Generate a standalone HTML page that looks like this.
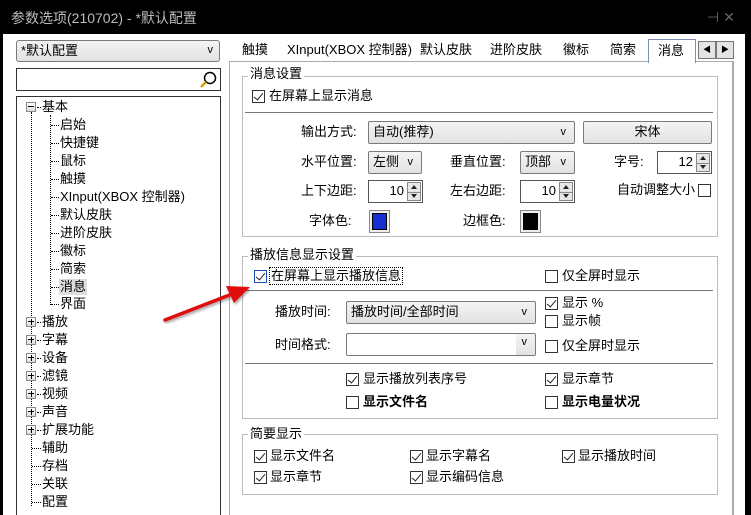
<!DOCTYPE html><html><head><meta charset="utf-8"><style>
*{margin:0;padding:0;box-sizing:border-box}
html{width:751px;height:515px;overflow:hidden;background:#000}
body{width:751px;height:515px;background:#000;position:relative;overflow:hidden;font-family:"Liberation Sans","Noto Sans CJK SC",sans-serif;font-size:13px;color:#000}
.a{position:absolute;white-space:nowrap}
.t{line-height:16px}
.cb{position:absolute;width:13px;height:13px;border:1px solid #333;background:#fff}
.cb.c::after{content:"";position:absolute;left:3px;top:0px;width:4px;height:8px;border:solid #222;border-width:0 1.5px 1.5px 0;transform:rotate(40deg)}
.combo{position:absolute;border:1px solid #7a7a7a;border-radius:2px;background:linear-gradient(#f4f4f4,#e2e2e2);line-height:18px}
.combo .v{position:absolute;right:8px;top:50%;transform:translateY(-55%);font-size:11px}
.grp{position:absolute;border:1px solid #bbb}
.leg{position:absolute;background:#fff;padding:0 2px;line-height:14px}
.sep{position:absolute;height:1px;background:#777}
.spin{position:absolute;border:1px solid #555;background:#fff;text-align:right;padding-right:18px;line-height:20px}
.spin .ar{position:absolute;right:1px;top:1px;width:14px;bottom:1px;border:1px solid #888;background:#e6e6e6}
.spin .ar::before{content:"";position:absolute;left:3px;top:2px;border:3px solid transparent;border-bottom:4px solid #222;border-top:0}
.spin .ar::after{content:"";position:absolute;left:3px;bottom:2px;border:3px solid transparent;border-top:4px solid #222;border-bottom:0}
.spin .ar i{position:absolute;left:0;right:0;top:50%;height:1px;background:#888}
.tr{position:absolute;line-height:16px}
.pb{position:absolute;width:10px;height:10px;border:1px solid #888;background:linear-gradient(#fff,#ddd)}
.pb::before{content:"";position:absolute;left:1px;top:3px;width:6px;height:1px;background:#000}
.pb.p::after{content:"";position:absolute;left:3.5px;top:1px;width:1px;height:6px;background:#000}
.dv{position:absolute;border-left:1px dotted #000;width:0}
.dh{position:absolute;border-top:1px dotted #000;height:0}
</style></head><body>
<div class="a" style="left:11px;top:8px;color:#bbb;font-size:14px">参数选项(210702) - *默认配置</div>
<div class="a" style="left:707px;top:9px;color:#666;font-size:14px">⊣ ✕</div>
<div class="a" style="left:3px;top:34px;width:742px;height:481px;background:#fff"></div>
<div class="combo" style="left:16px;top:40px;width:204px;height:22px;border-radius:3px"><span class="a" style="left:4px;top:1px">*默认配置</span><span class="v" style="right:6px">v</span></div>
<div class="a" style="left:16px;top:68px;width:205px;height:23px;border:1px solid #333;background:#fff"></div>
<svg class="a" style="left:199px;top:70px" width="20" height="20"><circle cx="11" cy="8" r="5.5" fill="none" stroke="#000" stroke-width="1.5"/><line x1="7" y1="12" x2="2" y2="17" stroke="#d8a000" stroke-width="2.5"/></svg>
<div class="a" style="left:16px;top:96px;width:205px;height:419px;border:1px solid #333;border-bottom:none;background:#fff"></div>
<div class="dv" style="left:31px;top:112px;height:394px"></div>
<div class="dv" style="left:50px;top:115px;height:190px"></div>
<div id="tree"></div>
<div class="a t" style="left:242px;top:42px">触摸</div>
<div class="a t" style="left:287px;top:42px">XInput(XBOX 控制器)</div>
<div class="a t" style="left:420px;top:42px">默认皮肤</div>
<div class="a t" style="left:490px;top:42px">进阶皮肤</div>
<div class="a t" style="left:563px;top:42px">徽标</div>
<div class="a t" style="left:610px;top:42px">简索</div>
<div class="a" style="left:229px;top:61px;width:505px;height:454px;border:1px solid #aaa;border-right:2px solid #aaa;border-bottom:none"></div>
<div class="a" style="left:648px;top:39px;width:48px;height:24px;border:1px solid #7f8fb0;border-bottom:none;background:#fff"></div>
<div class="a t" style="left:658px;top:43px">消息</div>
<div class="a" style="left:698px;top:41px;width:18px;height:18px;border:1px solid #777;background:#e4e4e4;font-size:8px;text-align:center;line-height:16px">◀</div>
<div class="a" style="left:716px;top:41px;width:18px;height:18px;border:1px solid #777;background:#e4e4e4;font-size:8px;text-align:center;line-height:16px">▶</div>
<div class="grp" style="left:242px;top:76px;width:476px;height:161px"></div>
<div class="leg" style="left:248px;top:67px">消息设置</div>
<div class="cb c" style="left:252px;top:90px"></div><div class="a t" style="left:269px;top:88px">在屏幕上显示消息</div>
<div class="sep" style="left:245px;top:112px;width:468px"></div>
<div class="a t" style="left:301px;top:124px">输出方式:</div>
<div class="combo" style="left:368px;top:121px;width:207px;height:23px"><span class="a" style="left:4px;top:1px">自动(推荐)</span><span class="v">v</span></div>
<div class="combo" style="left:583px;top:121px;width:129px;height:23px;text-align:center;line-height:20px">宋体</div>
<div class="a t" style="left:301px;top:154px">水平位置:</div>
<div class="combo" style="left:368px;top:151px;width:54px;height:23px"><span class="a" style="left:4px;top:1px">左侧</span><span class="v">v</span></div>
<div class="a t" style="left:450px;top:154px">垂直位置:</div>
<div class="combo" style="left:520px;top:151px;width:55px;height:23px"><span class="a" style="left:4px;top:1px">顶部</span><span class="v">v</span></div>
<div class="a t" style="left:614px;top:154px">字号:</div>
<div class="spin" style="left:657px;top:151px;width:55px;height:23px">12<div class="ar"><i></i></div></div>
<div class="a t" style="left:301px;top:183px">上下边距:</div>
<div class="spin" style="left:368px;top:180px;width:55px;height:23px">10<div class="ar"><i></i></div></div>
<div class="a t" style="left:450px;top:183px">左右边距:</div>
<div class="spin" style="left:520px;top:180px;width:55px;height:23px">10<div class="ar"><i></i></div></div>
<div class="a t" style="left:617px;top:182px">自动调整大小</div>
<div class="cb" style="left:698px;top:184px"></div>
<div class="a t" style="left:309px;top:213px">字体色:</div>
<div class="a" style="left:369px;top:210px;width:21px;height:23px;border:1px solid #888;padding:2px;background:#eee"><div style="width:15px;height:17px;background:#1530d0;border:1px solid #000"></div></div>
<div class="a t" style="left:463px;top:213px">边框色:</div>
<div class="a" style="left:520px;top:210px;width:21px;height:23px;border:1px solid #888;padding:2px;background:#eee"><div style="width:15px;height:17px;background:#000"></div></div>
<div class="grp" style="left:242px;top:256px;width:476px;height:163px"></div>
<div class="leg" style="left:248px;top:248px">播放信息显示设置</div>
<div class="cb c" style="left:254px;top:270px;border-color:#1a4fb0"></div>
<div class="a t" style="left:269px;top:267px;border:1px dotted #000;padding:0 1px">在屏幕上显示播放信息</div>
<div class="cb" style="left:545px;top:270px"></div><div class="a t" style="left:562px;top:268px">仅全屏时显示</div>
<div class="sep" style="left:245px;top:290px;width:468px"></div>
<div class="a t" style="left:275px;top:304px">播放时间:</div>
<div class="combo" style="left:346px;top:301px;width:190px;height:23px"><span class="a" style="left:4px;top:1px">播放时间/全部时间</span><span class="v">v</span></div>
<div class="cb c" style="left:545px;top:297px"></div><div class="a t" style="left:562px;top:295px">显示 %</div>
<div class="cb" style="left:545px;top:315px"></div><div class="a t" style="left:562px;top:313px">显示帧</div>
<div class="a t" style="left:275px;top:337px">时间格式:</div>
<div class="a" style="left:346px;top:333px;width:190px;height:23px;border:1px solid #7a7a7a;border-radius:2px;background:#fff"><div class="a" style="right:0;top:0;width:19px;height:21px;background:linear-gradient(#f4f4f4,#e2e2e2)"></div><span class="a" style="right:8px;top:2px;font-size:11px">v</span></div>
<div class="cb" style="left:545px;top:340px"></div><div class="a t" style="left:562px;top:338px">仅全屏时显示</div>
<div class="sep" style="left:245px;top:363px;width:468px"></div>
<div class="cb c" style="left:346px;top:373px"></div><div class="a t" style="left:363px;top:371px">显示播放列表序号</div>
<div class="cb c" style="left:545px;top:373px"></div><div class="a t" style="left:562px;top:371px">显示章节</div>
<div class="cb" style="left:346px;top:396px"></div><div class="a t" style="left:363px;top:394px;font-weight:bold">显示文件名</div>
<div class="cb" style="left:545px;top:396px"></div><div class="a t" style="left:562px;top:394px;font-weight:bold">显示电量状况</div>
<div class="grp" style="left:242px;top:434px;width:476px;height:61px"></div>
<div class="leg" style="left:248px;top:427px">简要显示</div>
<div class="cb c" style="left:254px;top:450px"></div><div class="a t" style="left:270px;top:448px">显示文件名</div>
<div class="cb c" style="left:410px;top:450px"></div><div class="a t" style="left:426px;top:448px">显示字幕名</div>
<div class="cb c" style="left:562px;top:450px"></div><div class="a t" style="left:578px;top:448px">显示播放时间</div>
<div class="cb c" style="left:254px;top:471px"></div><div class="a t" style="left:270px;top:469px">显示章节</div>
<div class="cb c" style="left:410px;top:471px"></div><div class="a t" style="left:426px;top:469px">显示编码信息</div>
<svg class="a" style="left:0;top:0" width="751" height="515"><defs><filter id="s"><feDropShadow dx="1" dy="2" stdDeviation="1.2" flood-opacity=".35"/></filter></defs>
<g filter="url(#s)"><line x1="165" y1="320" x2="232" y2="294" stroke="#e01010" stroke-width="3.5" stroke-linecap="round"/><polygon points="250,287 226,286 234,303" fill="#e01010"/></g></svg>
<script>
var items=[["基本",0,"m"],["启始",1],["快捷键",1],["鼠标",1],["触摸",1],["XInput(XBOX 控制器)",1],["默认皮肤",1],["进阶皮肤",1],["徽标",1],["简索",1],["消息",1,"s"],["界面",1],["播放",0,"p"],["字幕",0,"p"],["设备",0,"p"],["滤镜",0,"p"],["视频",0,"p"],["声音",0,"p"],["扩展功能",0,"p"],["辅助",0],["存档",0],["关联",0],["配置",0]];
var h="";items.forEach(function(it,i){var y=107+i*17.95;var yy=Math.round(y);
if(it[1]==0){h+='<div class="dh" style="left:'+(it[2]?37:32)+'px;top:'+yy+'px;width:'+(it[2]?4:9)+'px"></div>';if(it[2])h+='<div class="pb'+(it[2]=="p"?" p":"")+'" style="left:26px;top:'+(yy-5)+'px"></div>';h+='<div class="tr" style="left:42px;top:'+(yy-8)+'px">'+it[0]+'</div>';}
else{h+='<div class="dh" style="left:51px;top:'+yy+'px;width:8px"></div>';h+='<div class="tr" style="left:60px;top:'+(yy-8)+'px;'+(it[2]?'background:#ddd;padding:0 1px;left:59px':'')+'">'+it[0]+'</div>';}});
document.getElementById("tree").innerHTML=h;
</script>
</body></html>
